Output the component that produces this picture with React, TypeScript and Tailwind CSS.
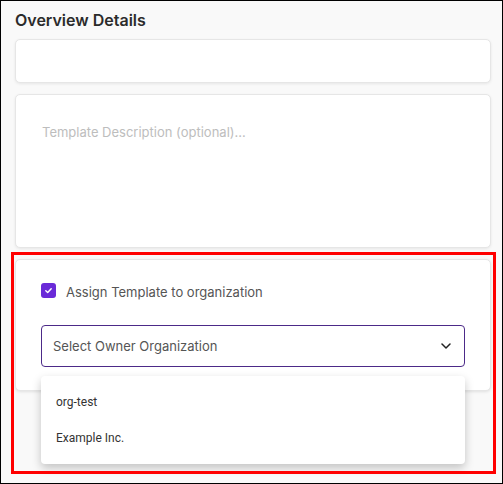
import { useState } from 'react'

const orgs = ['org-test', 'Example Inc.']

export default function App() {
  const [assign, setAssign] = useState(true)

  return (
    <div
      className="relative w-[503px] h-[484px] overflow-hidden border border-black bg-[#f9f9f9] pl-[14px] pr-[11px] pt-[7px]"
      style={{ fontFamily: 'Inter, "Noto Sans", sans-serif' }}
    >
      <h2 className="text-[16px] leading-6 font-semibold text-[#2b2b2b]">Overview Details</h2>

      <div className="mt-[7px] h-[44px] rounded-[5px] border border-[#e6e6e6] bg-white shadow-[0_1px_3px_rgba(0,0,0,0.08)]" />

      <div className="mt-[11px] h-[154px] rounded-[5px] border border-[#e6e6e6] bg-white pl-[26px] pt-[27px] shadow-[0_1px_3px_rgba(0,0,0,0.08)]">
        <p className="text-[13px] leading-5 text-[#bdbdbd]">Template Description (optional)...</p>
      </div>

      <div className="mt-[11px] rounded-[5px] border border-[#e6e6e6] bg-white px-[25px] pt-[23px] pb-[23px] shadow-[0_1px_3px_rgba(0,0,0,0.1)]">
        <label className="flex items-center gap-[10px] h-[15px]">
          <button
            onClick={() => setAssign(!assign)}
            className="flex h-[15px] w-[15px] items-center justify-center rounded-[3px] bg-[#6a2ad8]"
          >
            {assign && (
              <svg width="9" height="9" viewBox="0 0 10 10">
                <path d="M2 5.2 L4.1 7.2 L8 3" fill="none" stroke="white" strokeWidth="1.6" strokeLinecap="round" strokeLinejoin="round" />
              </svg>
            )}
          </button>
          <span className="mt-[3px] text-[13px] leading-5 text-[#555]">Assign Template to organization</span>
        </label>

        <div className="mt-[27px] flex h-[42px] items-center justify-between rounded-[4px] border border-[#4c2a88] pl-[11px] pr-[13px]">
          <span className="text-[13px] leading-5 text-[#555]">Select Owner Organization</span>
          <svg width="10" height="6" viewBox="0 0 10 6">
            <path d="M1 1 L5 5 L9 1" fill="none" stroke="#222" strokeWidth="1.5" strokeLinecap="round" strokeLinejoin="round" />
          </svg>
        </div>
      </div>

      {/* dropdown menu */}
      <div
        className="absolute left-[40px] top-[375px] w-[424px] rounded-[4px] bg-white py-2 shadow-[0_4px_10px_rgba(0,0,0,0.22)]"
        style={{ fontFamily: 'Roboto, "Liberation Sans", sans-serif' }}
      >
        {orgs.map((o) => (
          <div key={o} className="flex h-9 items-center px-[15px] text-[12px] text-[#333]">
            {o}
          </div>
        ))}
      </div>

      {/* highlight annotation */}
      <div className="pointer-events-none absolute left-[10px] top-[251px] h-[222px] w-[485px] border-[3px] border-[#ff0000]" />
    </div>
  )
}
